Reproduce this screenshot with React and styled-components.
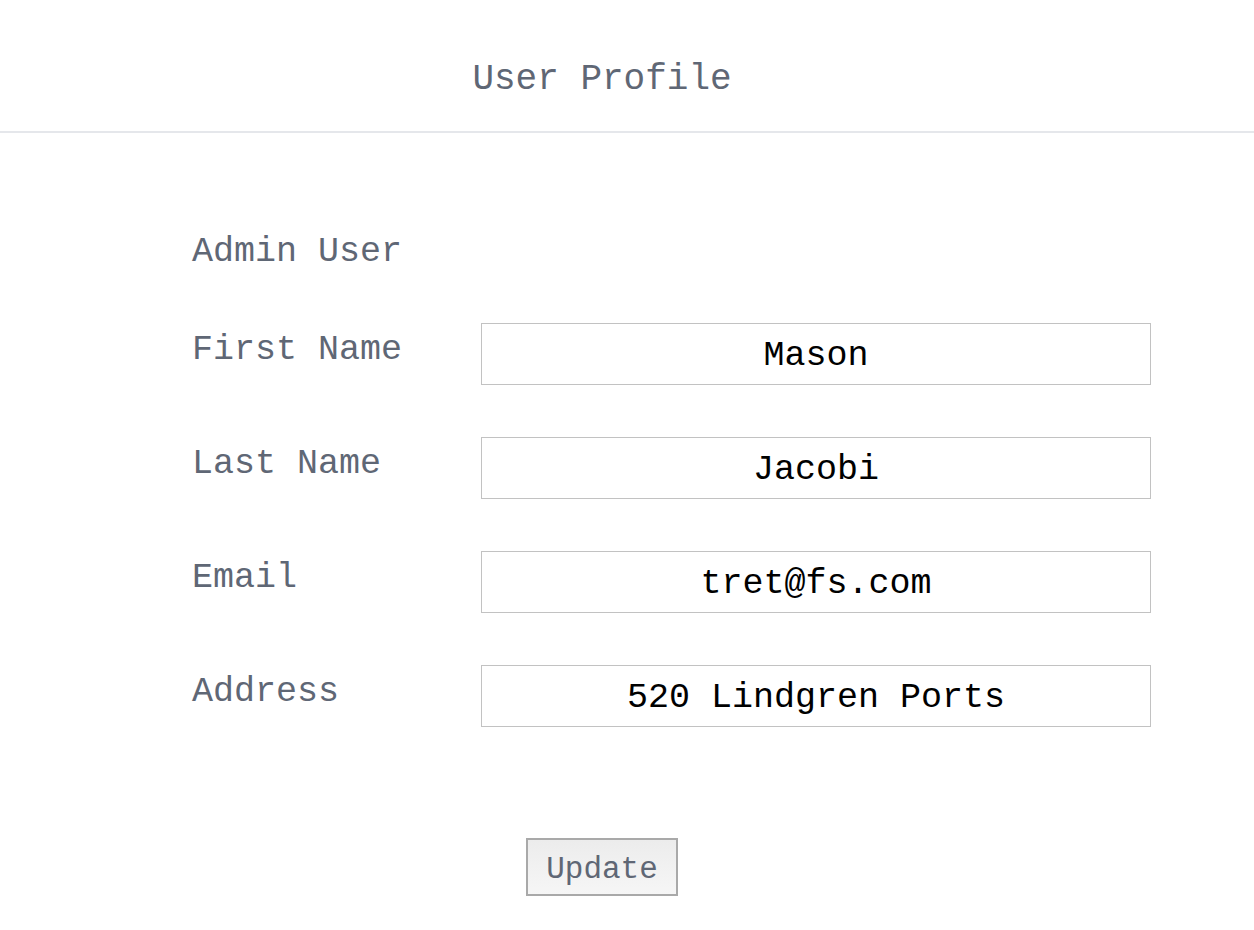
import styled, { createGlobalStyle } from 'styled-components';

const Global = createGlobalStyle`
  body {
    margin: 0;
    background: #ffffff;
    font-family: "Liberation Mono", "Courier New", monospace;
  }
`;

const Header = styled.header`
  height: 131px;
  display: flex;
  align-items: center;
  justify-content: center;
  padding-right: 50px;
  border-bottom: 2px solid #e5e7eb;
`;

const Title = styled.h1`
  margin: 0;
  padding-top: 28px;
  font-size: 36px;
  font-weight: normal;
  color: #5f6775;
`;

const Form = styled.form`
  padding: 96px 0 0 192px;
`;

const Heading = styled.div`
  font-size: 35px;
  color: #5f6775;
  line-height: 46px;
  margin-bottom: 48px;
`;

const Grid = styled.div`
  display: grid;
  grid-template-columns: 289px 670px;
  row-gap: 52px;
`;

const Label = styled.label`
  font-size: 35px;
  color: #5f6775;
  line-height: 46px;
  padding-top: 4px;
`;

const Input = styled.input`
  box-sizing: border-box;
  width: 670px;
  height: 62px;
  border: 1px solid #c2c2c2;
  font-family: "Liberation Mono", "Courier New", monospace;
  font-size: 35px;
  color: #000;
  text-align: center;
  padding: 4px 0 0;
  outline: none;
  background: #fff;
`;

const Actions = styled.div`
  display: flex;
  padding: 111px 0 0 334px;
`;

const Button = styled.button`
  width: 152px;
  height: 58px;
  border: 2px solid #a9a9a9;
  background: linear-gradient(#ececec, #f6f6f6);
  font-family: "Liberation Mono", "Courier New", monospace;
  font-size: 31px;
  color: #5f6775;
  padding: 4px 0 0;
`;

const fields = [
  ['First Name', 'Mason'],
  ['Last Name', 'Jacobi'],
  ['Email', 'tret@fs.com'],
  ['Address', '520 Lindgren Ports'],
];

export default function App() {
  return (
    <>
      <Global />
      <Header>
        <Title>User Profile</Title>
      </Header>
      <Form onSubmit={(e) => e.preventDefault()}>
        <Heading>Admin User</Heading>
        <Grid>
          {fields.map(([label, value]) => [
            <Label key={label + 'l'}>{label}</Label>,
            <Input key={label + 'i'} defaultValue={value} />,
          ])}
        </Grid>
        <Actions>
          <Button type="submit">Update</Button>
        </Actions>
      </Form>
    </>
  );
}
